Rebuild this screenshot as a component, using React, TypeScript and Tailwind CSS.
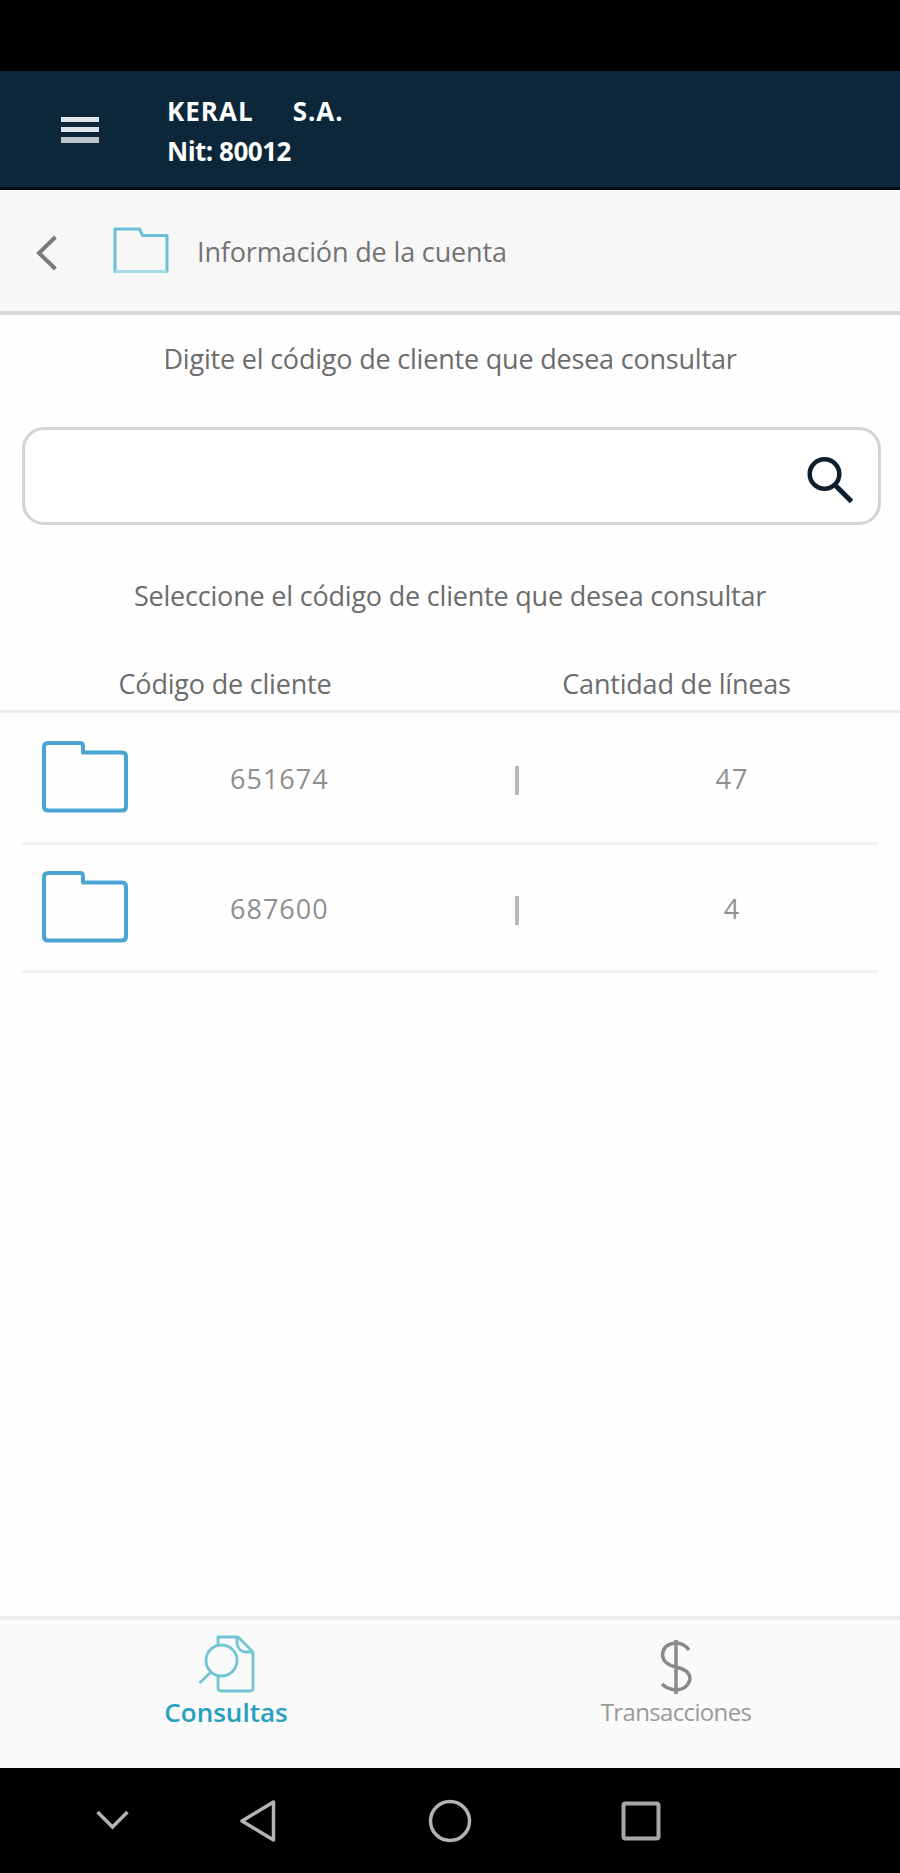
const accounts = [
  { code: "651674", lines: "47" },
  { code: "687600", lines: "4" },
];

function SmallFolder() {
  return (
    <svg width="56" height="48" viewBox="0 0 56 48" fill="none" stroke="#69bfd6" strokeWidth="3" strokeLinejoin="round">
      <path d="M2 2H26.500L29.500 8.500H54V44.500H2Z" />
      <path d="M2 44.500H54" stroke="#a5dce6" />
    </svg>
  );
}

function Folder() {
  return (
    <svg width="88" height="74" viewBox="0 0 88 74" fill="none" stroke="#4aa5d4" strokeWidth="4" strokeLinejoin="round">
      <path d="M6 2H38Q41 2 41 5V11.500H80Q84 11.500 84 15.500V65.500Q84 69.500 80 69.500H6Q2 69.500 2 65.500V6Q2 2 6 2Z" />
    </svg>
  );
}

function Header() {
  return (
    <header className="flex h-[119px] items-start border-b-[3px] border-[#020a18] bg-[#0c273a]">
      <div className="ml-[61px] mt-[46px] flex w-[38px] flex-col gap-[5px]">
        <span className="h-[5px] bg-[#dfe7ec]" />
        <span className="h-[5px] bg-[#dfe7ec]" />
        <span className="h-[6px] bg-[#bac5cd]" />
      </div>
      <div className="ml-[68px] mt-[20px] text-[26px] font-bold leading-10 text-white">
        <div className="flex gap-[39px] tracking-[1px]">
          <span>KERAL</span>
          <span>S.A.</span>
        </div>
        <div className="tracking-[-0.5px]">Nit: 80012</div>
      </div>
    </header>
  );
}

function TitleBar() {
  return (
    <div className="flex h-[125px] items-center border-b-4 border-[#dadada] bg-[#f7f7f7]">
      <svg className="ml-[36px] mt-1" width="22" height="36" viewBox="0 0 22 36" fill="none" stroke="#7b7b7b" strokeWidth="4">
        <path d="M19.500 2L3 18L19.500 34" />
      </svg>
      <div className="ml-[55px] mt-px">
        <SmallFolder />
      </div>
      <h1 className="ml-[28px] mt-[2px] text-[27px] leading-10 tracking-[-0.15px] text-[#737373]">Información de la cuenta</h1>
    </div>
  );
}

function SearchBox() {
  return (
    <div className="ml-[22px] mr-[19px] mt-[48px] flex h-[98px] items-center justify-end rounded-[22px] border-[3px] border-[#d3d5d5] bg-white pr-[23px]">
      <svg className="mt-[8px]" width="50" height="50" viewBox="0 0 50 50" fill="none" stroke="#0d1f2d">
        <circle cx="19.500" cy="19" r="14.800" strokeWidth="4.500" />
        <path d="M30 30L46.500 46.500" strokeWidth="5" />
      </svg>
    </div>
  );
}

function BottomTabs() {
  return (
    <nav className="grid h-[152px] grid-cols-2 border-t-4 border-[#ececec] bg-[#fafafa]">
      <div className="flex flex-col items-center pt-[14px]">
        <svg className="ml-[4px]" width="60" height="61" viewBox="0 0 60 61" fill="none" stroke="#72c6d3" strokeWidth="2.800" strokeLinejoin="round">
          <path d="M21 10V3H41L56 18V54Q56 57 53 57H24Q21 57 21 54V43" />
          <path d="M40 3V10Q42 18 49 18H56" />
          <circle cx="24.500" cy="26.500" r="15.500" />
          <path d="M14 38L2.500 49" />
        </svg>
        <span className="-mt-[2px] ml-[2px] text-[26px] font-semibold leading-[38px] text-[#299fc0]">Consultas</span>
      </div>
      <div className="flex flex-col items-center pt-[19px]">
        <svg className="ml-[2px]" width="36" height="58" viewBox="0 0 36 58" fill="none" stroke="#8a8a8a" strokeWidth="3.500">
          <path d="M18 1V55" />
          <path d="M31 11Q26 4 18 4Q5 5 4.500 16Q5 25 18 28Q32 31 32 40Q30 50 18 51Q9 50 4 45" />
        </svg>
        <span className="-mt-[4px] ml-[2px] text-[24px] leading-[38px] tracking-[-0.65px] text-[#999]">Transacciones</span>
      </div>
    </nav>
  );
}

function SystemBar() {
  return (
    <footer className="flex h-[105px] items-center bg-black pl-[95px]">
      <svg width="36" height="24" viewBox="0 0 36 24" fill="none" stroke="#b4b4b4" strokeWidth="3.500">
        <path d="M2.500 3L17.500 18L32.500 3" />
      </svg>
      <svg className="ml-[107px]" width="40" height="44" viewBox="0 0 40 44" fill="none" stroke="#b4b4b4" strokeWidth="3.500" strokeLinejoin="round">
        <path d="M35.500 3V41L4 22Z" />
      </svg>
      <svg className="ml-[149px]" width="46" height="46" viewBox="0 0 46 46" fill="none" stroke="#b4b4b4" strokeWidth="3.500">
        <circle cx="23" cy="23" r="19.500" />
      </svg>
      <svg className="ml-[148px]" width="40" height="40" viewBox="0 0 40 40" fill="none" stroke="#a8a8a8" strokeWidth="4">
        <rect x="2.500" y="2.500" width="35" height="35" rx="2" />
      </svg>
    </footer>
  );
}

export default function App() {
  return (
    <div className="flex h-[1873px] w-[900px] flex-col bg-[#fefefe] font-['Open_Sans','Noto_Sans',sans-serif]">
      <div className="h-[71px] bg-black" />
      <Header />
      <TitleBar />
      <main className="flex-1">
        <p className="mt-[24px] text-center text-[27px] leading-10 tracking-[-0.2px] text-[#6c6c6c]">
          Digite el código de cliente que desea consultar
        </p>
        <SearchBox />
        <p className="mt-[51px] text-center text-[27px] leading-10 tracking-[-0.2px] text-[#6c6c6c]">
          Seleccione el código de cliente que desea consultar
        </p>
        <div className="mt-[48px] grid h-[49px] grid-cols-2 border-b-[3px] border-[#ededed] text-center text-[27px] leading-10 tracking-[-0.2px] text-[#6c6c6c]">
          <span>Código de cliente</span>
          <span className="pl-[3px]">Cantidad de líneas</span>
        </div>
        <div className="px-[22px]">
          {accounts.map((account) => (
            <div
              key={account.code}
              className="flex h-[132px] items-center border-b-[3px] border-[#f3f3f3] text-[27px] text-[#8f8f8f] last:h-[128px]"
            >
              <div className="ml-[20px]">
                <Folder />
              </div>
              <span className="ml-[100px] mt-[3px] w-[285px] tracking-[1px]">{account.code}</span>
              <span className="mt-[6px] h-[29px] w-[4px] bg-[#b8b8b8]" />
              <span className="ml-[113px] mt-[3px] w-[200px] text-center tracking-[1px]">{account.lines}</span>
            </div>
          ))}
        </div>
      </main>
      <BottomTabs />
      <SystemBar />
    </div>
  );
}
